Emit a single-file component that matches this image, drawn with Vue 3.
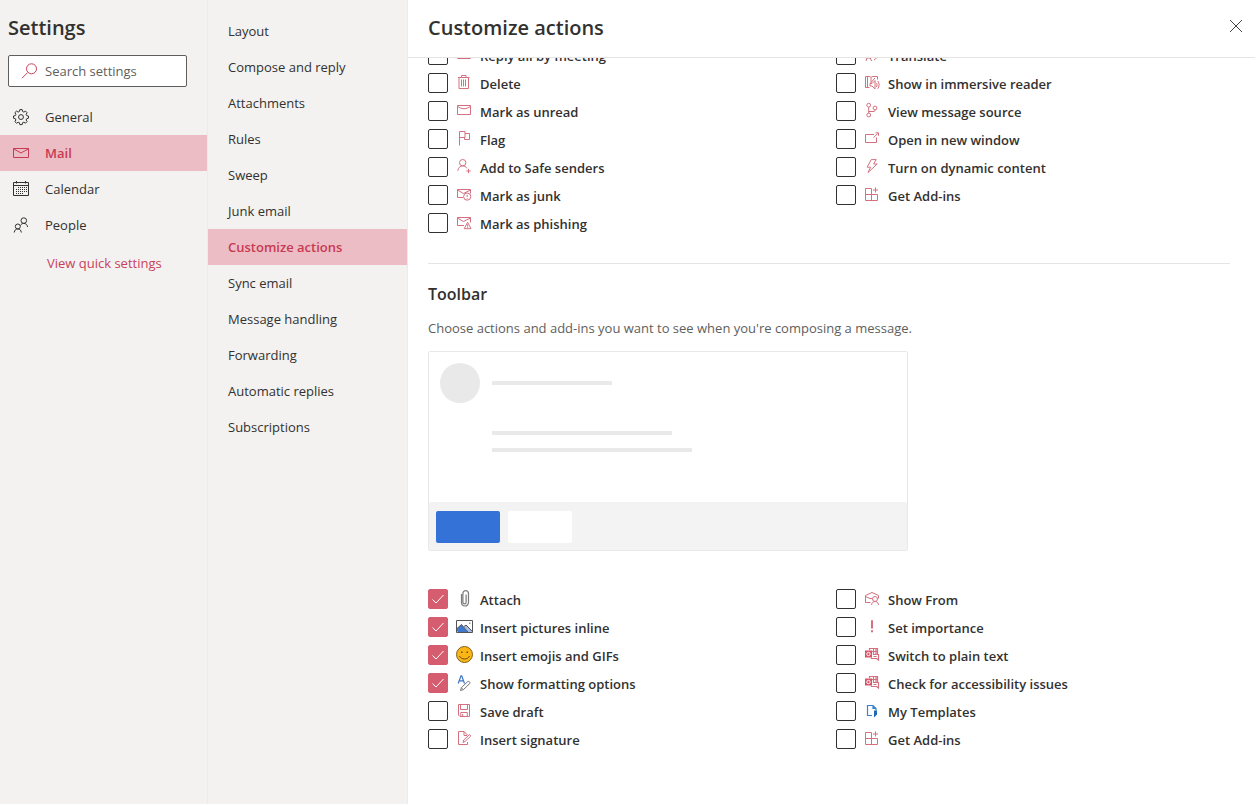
<script setup>
import { reactive, ref } from 'vue'

const search = ref('')

const icons = {
  search: [{ d: 'M1 15.2 6.6 9.6' }, { d: 'M10.5.8a5 5 0 1 1 0 10 5 5 0 0 1 0-10z' }],
  gear: [
    { d: 'M6.8.6h2.4l.4 1.9 1.3.6 1.6-1 1.6 1.6-1 1.6.6 1.3 1.8.4v2.2l-1.8.5-.6 1.3 1 1.6-1.6 1.6-1.6-1-1.3.5-.4 1.9H6.8l-.4-1.9-1.3-.5-1.6 1-1.6-1.6 1-1.6-.6-1.3L.5 9.2V7l1.8-.4.6-1.3-1-1.6 1.6-1.6 1.6 1 1.3-.6z' },
    { d: 'M8 5.6a2.4 2.4 0 1 1 0 4.9 2.4 2.4 0 0 1 0-4.9z' }
  ],
  mail: [{ d: 'M.5 3.5h15v9H.5z' }, { d: 'M.5 3.8 8 8l7.5-4.2' }],
  calendar: [
    { d: 'M.5 1.5h15v13H.5zM.5 4.500h15M3.500 0v2.500M12.500 0v2.500' },
    { d: 'M5 6.500h1M7 6.500h1M9 6.500h1M11 6.500h1M13 6.500h1M3 8.500h1M5 8.500h1M7 8.500h1M9 8.500h1M11 8.500h1M13 8.500h1M3 10.500h1M5 10.500h1M7 10.500h1M9 10.500h1M11 10.500h1M13 10.500h1M3 12.500h1M5 12.500h1M7 12.500h1M9 12.500h1' }
  ],
  people: [
    { d: 'M10.8.8a2.8 2.8 0 1 1 0 5.6 2.8 2.8 0 0 1 0-5.6zM4.8 7a2.5 2.5 0 1 1 0 5 2.5 2.5 0 0 1 0-5z' },
    { d: 'M1.2 15.5c.3-2.3 1.6-3.6 3.6-3.6s3.2 1.3 3.5 3.6M7.5 8.500c.5-1.300 1.700-2.100 3.300-2.100 2 0 3.500 1.300 3.800 3.600' }
  ],
  trash: [
    { d: 'M2 2.500h11.500M5.500 2.500v-2h4.500v2M3 2.500v11h9.500v-11' },
    { d: 'M5.500 4.500v7M7.500 4.500v7M9.500 4.500v7' }
  ],
  envelope: [{ d: 'M1.500 2.500h13v9h-13z' }, { d: 'M1.500 3c3 3.600 10 3.600 13 0' }],
  flag: [{ d: 'M3.500 14.500V.5h5.500v6H3.500M9 2.500h4.500v6H8.500v-2' }],
  personAdd: [
    { d: 'M6.700.5a3.200 3.200 0 1 1 0 6.400 3.200 3.200 0 0 1 0-6.400z' },
    { d: 'M1.800 11.800c.4-3 2.300-4.900 4.900-4.900 1.900 0 3.300.9 4.100 2.400M12.500 9.800v4.400M10.300 12h4.400' }
  ],
  junk: [
    { d: 'M7 10.500H1.500v-8h13v4M1.500 3l6 3.500 7-3.500' },
    { d: 'M11.200 6a3.600 3.600 0 1 1 0 7.200 3.600 3.600 0 0 1 0-7.200zM11.200 7.800v2.200M11.200 11v.9' }
  ],
  phishing: [
    { d: 'M8 10.500H1.500v-8h13v5M1.500 3l6 3.500 7-3.500' },
    { d: 'M11.600 7.300 15 13.700H8.200zM11.600 9.400v2.200M11.600 12.200v.8' }
  ],
  translate: [{ d: 'M2 14 4.500 6l3 8M3 11h3.500M9 8.500h5.500M11.700 6v2.500M10 13c2-1 3-2.500 3.200-4.500' }],
  reader: [
    { d: 'M5.500 12.500h-4v-11H5c1 0 1.700.4 2 1v6M7 2.500c.5-.6 1.200-1 2-1h4.500v3M3.500 1.500v11M7 7.500l4-4.500' },
    { d: 'M6 8.500h2l3-3v8.500l-3-3H6zM12.300 7.800c1 1.200 1 3 0 4.200M13.800 6c1.700 2.200 1.700 5.600 0 7.800' }
  ],
  branch: [
    { d: 'M4.700.3a1.900 1.900 0 1 1 0 3.800 1.900 1.900 0 0 1 0-3.800zM11 3.100a1.900 1.900 0 1 1 0 3.800 1.900 1.900 0 0 1 0-3.800zM4.700 10.100a1.900 1.900 0 1 1 0 3.800 1.900 1.900 0 0 1 0-3.800z' },
    { d: 'M4.700 4.100v6M4.700 8.500h5.300c.7 0 1-.4 1-1.600' }
  ],
  popout: [{ d: 'M10 3.500H1.500v8h11V6.500M9.500 6.700l4.500-4.500M11.500 1.800h3v3' }],
  bolt: [{ d: 'M7.200.6h5L9.600 5h3.600L4 13.500l2.600-5.300H3.200z' }],
  addins: [{ d: 'M7.500 1.500h-6v12h12v-6h-12M7.500 1.500v12M11.500.5v5M9 3h5' }],
  clip: [
    { d: 'M5.500 3v8.500a3.500 3.500 0 0 0 7 0V2.500a2.800 2.800 0 0 0-5.600 0v8.700a1.400 1.400 0 0 0 3.200 0V3.500', stroke: '#7a7a7a', width: 1.2 }
  ],
  picture: [
    { d: 'M.5 1.500h16v12H.5z', stroke: '#555', fill: '#fff' },
    { d: 'M1 12V9.500l4.500-4L12 13H2z', fill: '#3f78cf', stroke: 'none' },
    { d: 'M8 7.500l2-1.500 6 6v1h-3.500z', fill: '#a5bfe4', stroke: 'none' },
    { d: 'M1 9.500l4.500-4L12 13M8 7.500l2-1.500 6 6', stroke: '#555' },
    { d: 'M13 3.500h1.500v1.500H13z', fill: '#999', stroke: 'none' }
  ],
  emoji: [
    { d: 'M8.500-.5a8 8 0 1 1 0 16 8 8 0 0 1 0-16z', fill: '#fbb615', stroke: '#7d6220' },
    { d: 'M5 4.500h1.500v1.500H5zM10.500 4.500H12v1.500h-1.500z', fill: '#6b4c12', stroke: 'none' },
    { d: 'M3.500 9c1.500 4 8.500 4 10 0', stroke: '#6b4c12' }
  ],
  format: [
    { d: 'M2.200 8.500 5 .8h.7l2.800 7.700M3.300 5.800h4.200', stroke: '#3b78c9', width: 1.2 },
    { d: 'M4.500 15.500l.8-2.800 6.500-6.200c1.200-.6 2.600.8 2 2L7.300 14.700z', stroke: '#777' },
    { d: 'M5.300 12.700l2 2', stroke: '#777' }
  ],
  save: [{ d: 'M2.500 1.500h11v12h-9.500l-1.500-1.500zM4.500 1.500v5h7v-5M4.800 13.500v-4h6.500v4M6.700 11v2' }],
  signature: [{ d: 'M11.500 11v2.500h-9V.5h5.500l3.500 3.500M8 .5v4h3M7 11.500l.7-2.500 5.800-5.500 1.300 1.500L9 10.500z' }],
  from: [
    { d: 'M6.500 11.500h-5v-7L8 1.500l6.500 3v3M1.500 5.500 6 7.500h2' },
    { d: 'M11 5.500a2.500 2.500 0 1 1 0 5 2.500 2.500 0 0 1 0-5z' },
    { d: 'M7.500 14c.3-2.300 1.600-3.500 3.500-3.500s3.200 1.200 3.500 3.500' }
  ],
  important: [
    { d: 'M8 1.3v8.200', width: 2 },
    { d: 'M8 11.200v2', width: 2 }
  ],
  office: [
    { d: 'M1 3.500h7v7H1z', fill: '#d65368', stroke: 'none' },
    { d: 'M4.500 5.300a1.700 1.700 0 1 1 0 3.400 1.700 1.700 0 0 1 0-3.400z', stroke: '#fff' },
    { d: 'M5.500 3V1.500h8v6M8 4.500h5.500M9.500 1.500v6h5v5.500l-2-1.500h-5v-1M12 1.500v6M9.500 9.500h3', width: 1.2 }
  ],
  template: [
    { d: 'M8 12.500H3.500v-10H9l3 3v2M9 2.500v3h3', stroke: '#3b82cc', width: 1.2 },
    { d: 'M10 7.500h3v4l-3 3z', fill: '#1f69b5', stroke: 'none' }
  ]
}

const sections = [
  { label: 'General', icon: 'gear' },
  { label: 'Mail', icon: 'mail', active: true },
  { label: 'Calendar', icon: 'calendar' },
  { label: 'People', icon: 'people' }
]

const pages = [
  'Layout', 'Compose and reply', 'Attachments', 'Rules', 'Sweep', 'Junk email',
  'Customize actions', 'Sync email', 'Message handling', 'Forwarding',
  'Automatic replies', 'Subscriptions'
]
const currentPage = 'Customize actions'

const groups = reactive([
  {
    id: 'surface',
    columns: [
      [
        { label: 'Reply all by meeting', icon: 'envelope', on: false },
        { label: 'Delete', icon: 'trash', on: false },
        { label: 'Mark as unread', icon: 'envelope', on: false },
        { label: 'Flag', icon: 'flag', on: false },
        { label: 'Add to Safe senders', icon: 'personAdd', on: false },
        { label: 'Mark as junk', icon: 'junk', on: false },
        { label: 'Mark as phishing', icon: 'phishing', on: false }
      ],
      [
        { label: 'Translate', icon: 'translate', on: false },
        { label: 'Show in immersive reader', icon: 'reader', on: false },
        { label: 'View message source', icon: 'branch', on: false },
        { label: 'Open in new window', icon: 'popout', on: false },
        { label: 'Turn on dynamic content', icon: 'bolt', on: false },
        { label: 'Get Add-ins', icon: 'addins', on: false }
      ]
    ]
  },
  {
    id: 'toolbar',
    title: 'Toolbar',
    text: "Choose actions and add-ins you want to see when you're composing a message.",
    columns: [
      [
        { label: 'Attach', icon: 'clip', on: true },
        { label: 'Insert pictures inline', icon: 'picture', on: true },
        { label: 'Insert emojis and GIFs', icon: 'emoji', on: true },
        { label: 'Show formatting options', icon: 'format', on: true },
        { label: 'Save draft', icon: 'save', on: false },
        { label: 'Insert signature', icon: 'signature', on: false }
      ],
      [
        { label: 'Show From', icon: 'from', on: false },
        { label: 'Set importance', icon: 'important', on: false },
        { label: 'Switch to plain text', icon: 'office', on: false },
        { label: 'Check for accessibility issues', icon: 'office', on: false },
        { label: 'My Templates', icon: 'template', on: false },
        { label: 'Get Add-ins', icon: 'addins', on: false }
      ]
    ]
  }
])
</script>

<template>
  <div class="settings">
    <aside class="sections">
      <h1 class="heading">Settings</h1>
      <label class="search">
        <svg class="icon" viewBox="0 0 16 16" aria-hidden="true">
          <path v-for="(p, i) in icons.search" :key="i" :d="p.d" />
        </svg>
        <input v-model="search" type="text" placeholder="Search settings" aria-label="Search settings" />
      </label>
      <nav class="section-list">
        <a v-for="s in sections" :key="s.label" href="#" class="section" :class="{ active: s.active }">
          <svg class="icon" viewBox="0 0 16 16" aria-hidden="true">
            <path v-for="(p, i) in icons[s.icon]" :key="i" :d="p.d" />
          </svg>
          <span>{{ s.label }}</span>
        </a>
      </nav>
      <a href="#" class="quick">View quick settings</a>
    </aside>

    <nav class="pages">
      <a v-for="p in pages" :key="p" href="#" class="page" :class="{ active: p === currentPage }">{{ p }}</a>
    </nav>

    <main class="panel">
      <header class="panel-head">
        <h2 class="heading">Customize actions</h2>
        <button type="button" class="close" aria-label="Close">
          <svg viewBox="0 0 14 14" aria-hidden="true"><path d="M1 1l12 12M13 1 1 13" /></svg>
        </button>
      </header>

      <div class="panel-body">
        <section v-for="g in groups" :key="g.id" class="group" :class="g.id">
          <template v-if="g.title">
            <h3 class="group-title">{{ g.title }}</h3>
            <p class="group-text">{{ g.text }}</p>
            <div class="preview" aria-hidden="true">
              <div class="preview-top">
                <span class="avatar"></span>
                <div class="lines">
                  <span class="line short"></span>
                  <span class="line medium"></span>
                  <span class="line long"></span>
                </div>
              </div>
              <div class="preview-foot">
                <span class="block primary"></span>
                <span class="block"></span>
              </div>
            </div>
          </template>

          <div class="columns">
            <ul v-for="(column, c) in g.columns" :key="c" class="options">
              <li v-for="o in column" :key="o.label">
                <label class="option">
                  <span class="check">
                    <input v-model="o.on" type="checkbox" />
                    <svg v-if="o.on" viewBox="0 0 20 20" aria-hidden="true"><path d="M4.500 10.500l3.500 3.500 7.500-8" /></svg>
                  </span>
                  <svg class="icon" viewBox="0 0 16 16" aria-hidden="true">
                    <path
                      v-for="(p, i) in icons[o.icon]"
                      :key="i"
                      :d="p.d"
                      :fill="p.fill || 'none'"
                      :stroke="p.stroke || '#d4707f'"
                      :stroke-width="p.width || 1"
                    />
                  </svg>
                  <span class="option-label">{{ o.label }}</span>
                </label>
              </li>
            </ul>
          </div>
        </section>
      </div>
    </main>
  </div>
</template>

<style>
body {
  margin: 0;
}
</style>

<style scoped>
.settings {
  display: flex;
  height: 100vh;
  overflow: hidden;
  background: #fff;
  color: #323130;
  font: 400 13px/20px "Open Sans", "Noto Sans", sans-serif;
}

.settings *,
.settings *::before {
  box-sizing: border-box;
}

a {
  color: inherit;
  text-decoration: none;
}

.heading {
  margin: 0;
  font-size: 20px;
  line-height: 28px;
  font-weight: 600;
}

.icon {
  flex: none;
  width: 16px;
  height: 16px;
  overflow: visible;
  fill: none;
  stroke: currentColor;
}

.sections {
  flex: none;
  width: 208px;
  padding-top: 14px;
  border-right: 1px solid #edebe9;
  background: #f3f2f1;
}

.sections .heading {
  padding-left: 8px;
}

.search {
  display: flex;
  align-items: center;
  gap: 8px;
  height: 32px;
  margin: 13px 20px 12px 8px;
  padding: 0 12px;
  border: 1px solid #605e5c;
  border-radius: 2px;
  background: #fff;
  color: #c8415a;
}

.search input {
  flex: 1;
  min-width: 0;
  padding: 0;
  border: 0;
  outline: 0;
  background: none;
  color: #323130;
  font: inherit;
}

.search input::placeholder {
  color: #605e5c;
  opacity: 1;
}

.section {
  display: flex;
  align-items: center;
  gap: 16px;
  height: 36px;
  padding-left: 13px;
}

.active {
  background: #ecbdc5;
  color: #c73a53;
  font-weight: 600;
}

.quick {
  display: block;
  margin-top: 10px;
  padding-left: 47px;
  color: #c8415a;
}

.pages {
  flex: none;
  width: 200px;
  padding-top: 13px;
  border-right: 1px solid #edebe9;
  background: #f3f2f1;
}

.page {
  display: block;
  padding-left: 20px;
  line-height: 36px;
}

.panel {
  display: flex;
  flex: 1;
  flex-direction: column;
  min-width: 0;
}

.panel-head {
  display: flex;
  flex: none;
  align-items: flex-start;
  justify-content: space-between;
  height: 58px;
  padding: 14px 12px 0 20px;
  border-bottom: 1px solid #e6e5e4;
}

.close {
  display: flex;
  align-items: center;
  height: 24px;
  padding: 0;
  border: 0;
  background: none;
}

.close svg {
  width: 14px;
  height: 14px;
  fill: none;
  stroke: #444;
}

.panel-body {
  flex: 1;
  min-height: 0;
  padding: 0 25px 0 20px;
  overflow: hidden;
}

.surface {
  margin-top: -17px;
  padding-bottom: 26px;
  border-bottom: 1px solid #e6e5e4;
}

.toolbar {
  padding-top: 20px;
}

.group-title {
  margin: 0;
  font-size: 16px;
  line-height: 20px;
  font-weight: 600;
}

.group-text {
  margin: 14px 0 13px;
  color: #605e5c;
}

.preview {
  max-width: 480px;
  margin-bottom: 34px;
  border: 1px solid #e8e8e8;
  border-radius: 2px;
}

.preview-top {
  display: flex;
  gap: 12px;
  height: 150px;
  padding: 11px;
}

.avatar {
  width: 40px;
  height: 40px;
  border-radius: 50%;
  background: #e9e9e9;
}

.lines {
  display: flex;
  flex: 1;
  flex-direction: column;
  padding-top: 18px;
}

.line {
  height: 4px;
  background: #e9e9e9;
}

.short {
  width: 120px;
}

.medium {
  width: 180px;
  margin: 46px 0 13px;
}

.long {
  width: 200px;
}

.preview-foot {
  display: flex;
  gap: 8px;
  height: 48px;
  padding: 9px 7px 7px;
  background: #f3f3f3;
}

.block {
  width: 64px;
  border-radius: 2px;
  background: #fff;
}

.primary {
  background: #3572d7;
}

.columns {
  display: grid;
  grid-template-columns: 1fr 1fr;
  gap: 14px;
}

.options {
  margin: 0;
  padding: 0;
  list-style: none;
}

.option {
  display: flex;
  align-items: center;
  gap: 8px;
  height: 28px;
}

.check {
  display: grid;
  flex: none;
  width: 20px;
  height: 20px;
}

.check input {
  grid-area: 1 / 1;
  width: 20px;
  height: 20px;
  margin: 0;
  border: 1px solid #323130;
  border-radius: 2px;
  background: #fff;
  appearance: none;
}

.check input:checked {
  border-color: #d65d70;
  background: #d65d70;
}

.check svg {
  grid-area: 1 / 1;
  fill: none;
  stroke: #fff;
  pointer-events: none;
}

.option-label {
  padding-top: 2px;
  font-weight: 600;
}
</style>
